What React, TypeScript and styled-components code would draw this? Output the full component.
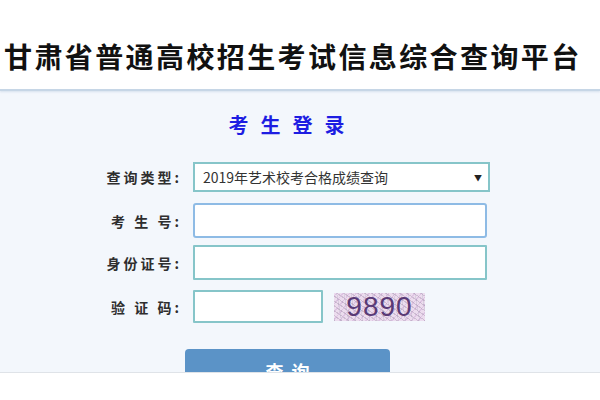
import React from "react";
import styled, { createGlobalStyle } from "styled-components";

const Global = createGlobalStyle`
  html, body { margin: 0; padding: 0; background: #ffffff; }
  body { font-family: "Noto Sans CJK SC", "Noto Sans", sans-serif; }
`;

const Page = styled.div`
  width: 600px;
  height: 400px;
  overflow: hidden;
  background: #ffffff;
`;

const Header = styled.header`
  height: 91px;
  box-sizing: border-box;
  padding: 42px 0 0 4px;
  background: #ffffff;
  border-bottom: 2px solid #c6d6e6;
  box-shadow: 0 1px 2px rgba(150, 175, 205, 0.3);
  position: relative;
  z-index: 1;
`;

const SiteTitle = styled.h1`
  margin: 0;
  font-size: 28px;
  line-height: 28px;
  font-weight: 700;
  letter-spacing: 2.4px;
  color: #111111;
  white-space: nowrap;
`;

const Panel = styled.main`
  height: 282px;
  box-sizing: border-box;
  background: #f3f7fc;
  padding-top: 24px;
  overflow: hidden;
  border-bottom: 1px solid #dfe3e8;
`;

const LoginTitle = styled.h2`
  margin: 0 0 27px;
  text-align: center;
  padding-right: 15px;
  font-size: 20px;
  line-height: 20px;
  font-weight: 700;
  letter-spacing: 12px;
  color: #1d1de2;
`;

const Row = styled.div<{ $mt: number }>`
  display: flex;
  align-items: center;
  margin-top: ${(p) => p.$mt}px;
  padding-left: 80px;
`;

const Label = styled.label`
  width: 102px;
  margin-right: 11px;
  text-align: right;
  font-size: 14px;
  font-weight: 700;
  letter-spacing: 3px;
  color: #2e2e2e;
  white-space: pre;
`;

const Select = styled.div`
  width: 297px;
  height: 30px;
  box-sizing: border-box;
  border: 2px solid #86c5c9;
  background: #ffffff;
  display: flex;
  align-items: center;
  justify-content: space-between;
  padding: 0 6px 0 8px;
  font-size: 14px;
  color: #333333;
`;

const Arrow = styled.span`
  font-size: 8px;
  color: #222222;
`;

const Input = styled.div<{ $w: number; $h: number; $focus?: boolean }>`
  width: ${(p) => p.$w}px;
  height: ${(p) => p.$h}px;
  box-sizing: border-box;
  background: #ffffff;
  border: 2px solid ${(p) => (p.$focus ? "#8ebbe5" : "#86c5c9")};
  border-radius: ${(p) => (p.$focus ? 3 : 1)}px;
`;

const Captcha = styled.div`
  margin-left: 11px;
  width: 91px;
  height: 28px;
  display: flex;
  align-items: center;
  justify-content: center;
  background-color: #ecdcee;
  background-image:
    repeating-linear-gradient(35deg, rgba(150, 130, 160, 0.35) 0 1px, transparent 1px 4px),
    repeating-linear-gradient(-50deg, rgba(200, 160, 210, 0.4) 0 1px, transparent 1px 5px),
    repeating-linear-gradient(80deg, rgba(170, 170, 190, 0.3) 0 1px, transparent 1px 7px);
  font-family: "Liberation Sans", Arial, sans-serif;
  font-size: 28px;
  line-height: 28px;
  letter-spacing: 1px;
  color: #5a3a76;
`;

const Button = styled.button`
  margin: 26px 0 0 185px;
  width: 205px;
  height: 40px;
  border: none;
  border-radius: 4px;
  background: #5b93c7;
  color: #ffffff;
  font-family: "Noto Sans CJK SC", sans-serif;
  font-size: 18px;
  font-weight: 700;
  letter-spacing: 8px;
  padding: 4px 0 0 8px;
  display: block;
`;

export default function App() {
  return (
    <Page>
      <Global />
      <Header>
        <SiteTitle>甘肃省普通高校招生考试信息综合查询平台</SiteTitle>
      </Header>
      <Panel>
        <LoginTitle>考生登录</LoginTitle>
        <Row $mt={0}>
          <Label>查询类型:</Label>
          <Select>
            <span>2019年艺术校考合格成绩查询</span>
            <Arrow>▼</Arrow>
          </Select>
        </Row>
        <Row $mt={11}>
          <Label>考 生 号:</Label>
          <Input $w={294} $h={35} $focus />
        </Row>
        <Row $mt={7}>
          <Label>身份证号:</Label>
          <Input $w={294} $h={35} />
        </Row>
        <Row $mt={10}>
          <Label>验 证 码:</Label>
          <Input $w={130} $h={33} />
          <Captcha>9890</Captcha>
        </Row>
        <Button>查询</Button>
      </Panel>
    </Page>
  );
}
